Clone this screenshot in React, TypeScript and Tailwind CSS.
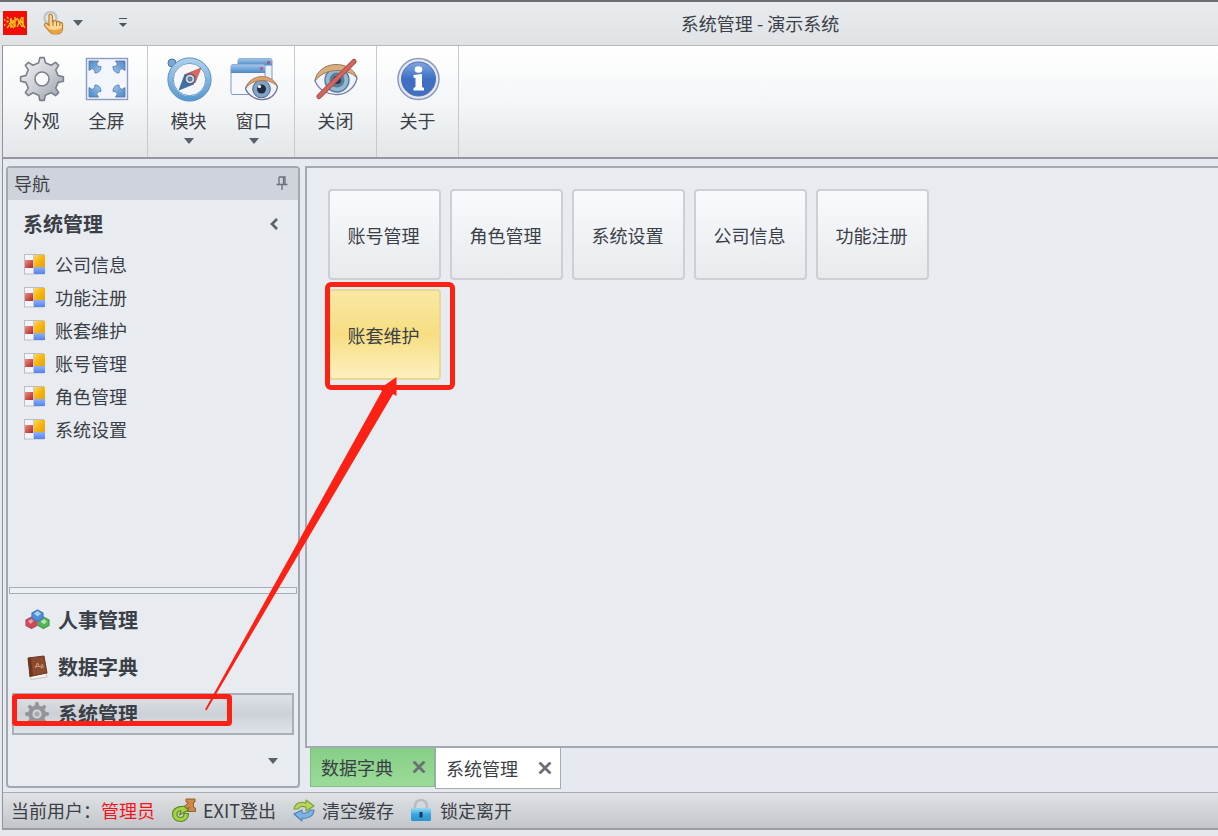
import type { ReactNode } from "react";

const gear = (teeth: number, outer: number, inner: number, c: number) => {
  const pts: string[] = [];
  const step = (Math.PI * 2) / teeth;
  for (let i = 0; i < teeth; i++) {
    const a = i * step - Math.PI / 2;
    const parts: [number, number][] = [
      [a - step * 0.26, inner],
      [a - step * 0.13, outer],
      [a + step * 0.13, outer],
      [a + step * 0.26, inner],
    ];
    parts.forEach(([t, r]) => pts.push(`${(c + Math.cos(t) * r).toFixed(2)} ${(c + Math.sin(t) * r).toFixed(2)}`));
  }
  return `M${pts.join("L")}Z`;
};

function GearIcon() {
  return (
    <svg viewBox="0 0 46 46" className="h-[46px] w-[46px]" aria-hidden="true">
      <defs>
        <linearGradient id="gearFill" x1="0" y1="0" x2="1" y2="1">
          <stop offset="0" stopColor="#f3f4f6" />
          <stop offset="0.5" stopColor="#cdd0d6" />
          <stop offset="1" stopColor="#969ba6" />
        </linearGradient>
      </defs>
      <path
        fillRule="evenodd"
        d={gear(8, 21.5, 16.5, 23) + "M23 16a7 7 0 1 0 0 14a7 7 0 1 0 0-14Z"}
        fill="url(#gearFill)"
        stroke="#7b818c"
        strokeWidth="1.6"
        strokeLinejoin="round"
      />
    </svg>
  );
}

function FullScreenIcon() {
  const arrow = "M0.500 0.500H10L8 3.500C9 5.500 10.500 6 12.500 6C12.500 8 12 9.500 11 10.500C10 12 8.500 12.500 6.500 12.500C6.500 10.500 5.500 9 3.500 8L0.500 10Z";
  return (
    <svg viewBox="0 0 44 44" className="h-11 w-11" aria-hidden="true">
      <defs>
        <linearGradient id="fsFill" x1="0" y1="0" x2="1" y2="1">
          <stop offset="0" stopColor="#4a86c4" />
          <stop offset="1" stopColor="#9cc6ee" />
        </linearGradient>
      </defs>
      <rect x="1.5" y="1.5" width="41" height="41" fill="#f3f5fd" stroke="#8a9cc6" strokeWidth="1.4" />
      <g fill="url(#fsFill)" stroke="#5a7cad" strokeWidth="0.9" strokeLinejoin="round">
        <path d={arrow} transform="translate(3.5 3.5)" />
        <path d={arrow} transform="translate(40.5 3.5) scale(-1 1)" />
        <path d={arrow} transform="translate(3.5 40.5) scale(1 -1)" />
        <path d={arrow} transform="translate(40.5 40.5) scale(-1 -1)" />
      </g>
    </svg>
  );
}

function CompassIcon() {
  return (
    <svg viewBox="0 0 46 46" className="h-[46px] w-[46px]" aria-hidden="true">
      <defs>
        <linearGradient id="cmpRing" x1="0" y1="0" x2="0" y2="1">
          <stop offset="0" stopColor="#a9d0ec" />
          <stop offset="1" stopColor="#5a9ad2" />
        </linearGradient>
      </defs>
      <circle cx="6" cy="7" r="4" fill="#79a9d3" stroke="#4b76a5" />
      <circle cx="23.500" cy="23.500" r="19" fill="#f4f6fa" stroke="url(#cmpRing)" strokeWidth="5" />
      <circle cx="23.500" cy="23.500" r="21.6" fill="none" stroke="#5a8dbd" strokeWidth="1" />
      <circle cx="23.500" cy="23.500" r="16.2" fill="none" stroke="#6d9ac4" strokeWidth="1" />
      <path d="M35 12L29 27L20 18Z" fill="#e0655c" stroke="#b35050" strokeWidth="0.6" />
      <path d="M13 34L28 28L19 18Z" fill="#416fa9" stroke="#305987" strokeWidth="0.6" />
      <circle cx="24" cy="23" r="5" fill="#c9d9ea" stroke="#4b5f7e" strokeWidth="1.3" />
      <circle cx="24" cy="23" r="2" fill="#748ead" stroke="#4b5f7e" />
    </svg>
  );
}

function WindowEyeIcon() {
  return (
    <svg viewBox="0 0 48 46" className="h-[46px] w-12" aria-hidden="true">
      <defs>
        <linearGradient id="winBar" x1="0" y1="0" x2="0" y2="1">
          <stop offset="0" stopColor="#a3c9ec" />
          <stop offset="1" stopColor="#4a86c4" />
        </linearGradient>
      </defs>
      <rect x="8" y="2.500" width="34" height="30" rx="2" fill="#eef2fb" stroke="#7f98c4" />
      <path d="M8 4.500a2 2 0 0 1 2-2H40a2 2 0 0 1 2 2V9.500H8Z" fill="url(#winBar)" />
      <rect x="1" y="8.500" width="34" height="30" rx="2" fill="#f6f8fe" stroke="#7f98c4" />
      <path d="M1 10.500a2 2 0 0 1 2-2H33a2 2 0 0 1 2 2V17H1Z" fill="url(#winBar)" />
      <rect x="30" y="11" width="3" height="3" fill="#b0608f" />
      <rect x="37" y="5" width="3" height="3" fill="#9a5f8c" />
      <path d="M15.500 33C20 19 43 19 47.500 31C44 48 22 47 15.500 33Z" fill="#f1f1fa" stroke="#74769f" strokeWidth="1.3" />
      <circle cx="31.500" cy="33" r="8.800" fill="#83a3c2" stroke="#4b6888" />
      <circle cx="31.500" cy="33" r="4.500" fill="#202c40" />
      <circle cx="29.500" cy="30.500" r="1.6" fill="#fff" />
      <path d="M15.500 32C21 17 42 17 47 30C40 22.500 24 22 15.500 32Z" fill="#e0a068" stroke="#a07655" strokeWidth="0.8" />
    </svg>
  );
}

function EyeOffIcon() {
  return (
    <svg viewBox="0 0 46 46" className="h-[46px] w-[46px]" aria-hidden="true">
      <path d="M2 25C8 6 38 6 44 22C40 42 11 45 2 25Z" fill="#f1f3fb" stroke="#7c83a8" strokeWidth="1.3" />
      <circle cx="24" cy="24" r="12" fill="#93b8cf" stroke="#547a9c" strokeWidth="1.4" />
      <circle cx="24" cy="24" r="7.500" fill="#567e9e" />
      <circle cx="24" cy="24" r="4" fill="#28384b" />
      <path d="M2 25C5 4 38 3 44 22C34 11 11 12 2 25Z" fill="#d9ae7c" stroke="#99795d" />
      <path d="M6 40.500L41 5.500" stroke="#a34444" strokeWidth="5.200" strokeLinecap="round" />
      <path d="M6 40.500L41 5.500" stroke="#d2665c" strokeWidth="3.400" strokeLinecap="round" />
    </svg>
  );
}

function InfoIcon() {
  return (
    <svg viewBox="0 0 46 46" className="h-[46px] w-[46px]" aria-hidden="true">
      <defs>
        <linearGradient id="infoFill" x1="0" y1="0" x2="0" y2="1">
          <stop offset="0" stopColor="#7fa7e2" />
          <stop offset="0.5" stopColor="#3d6fc4" />
          <stop offset="1" stopColor="#4371c2" />
        </linearGradient>
      </defs>
      <circle cx="23.500" cy="23" r="20.500" fill="#e3e6f4" stroke="#8d98b8" strokeWidth="1.5" />
      <circle cx="23.500" cy="23" r="17" fill="url(#infoFill)" stroke="#4e6fae" />
      <ellipse cx="23.500" cy="13.500" rx="3.800" ry="3.200" fill="#fff" />
      <path d="M18.500 19L27 18V31L29 32V34.500H18.500V32L20.500 31V22L18.500 21.500Z" fill="#fff" />
    </svg>
  );
}

function HandIcon() {
  return (
    <svg viewBox="0 0 24 26" className="h-[26px] w-6" aria-hidden="true">
      <circle cx="7.500" cy="8" r="6" fill="none" stroke="#bfc6ca" strokeWidth="2.500" />
      <path
        d="M6 5c1.500-1.300 3.500-.3 3.500 1.300V12l1.500-1.500 2 .5 1 .8 1.700-.6 1.300 1.300 1.500-.2 1 1.500V19c0 3-2.500 5-5.500 5H11c-2 0-3.500-1-4.500-2.500L1.500 15.500c-.5-1.500 1-2.700 2.500-1.700L6 15.500Z"
        fill="#ffd795"
        stroke="#bd7d2e"
        strokeWidth="1.200"
      />
      <path d="M10 12v4M13.500 12v4M16.800 13v3" stroke="#b0742d" strokeWidth="1" />
      <path d="M5 18c3 2.500 9 2.500 14 0c0 3-2 5.500-5 5.500h-4c-2 0-4-3-5-5.500Z" fill="#eba23e" />
    </svg>
  );
}

function AppLogo() {
  return (
    <svg viewBox="0 0 24 24" className="h-6 w-6" aria-hidden="true">
      <rect width="24" height="24" fill="#f30d0a" />
      <path
        d="M1 9h1.500M1 14h1.500M4 6l1.500 1.500M3.500 11l2-1M4 17l2.500-3M8 7v10M7 8l5 8M12 6v10M14 7l5 9M14 16l5-10M20 6v10M10 12l4-4M17 8l5 9M6 12l5 5M15 11h5M7 10h4"
        stroke="#f0c81c"
        strokeWidth="1.400"
        fill="none"
      />
    </svg>
  );
}

function FormIcon() {
  return (
    <svg viewBox="0 0 21 21" className="h-[21px] w-[21px] shrink-0" aria-hidden="true">
      <defs>
        <linearGradient id="fmY" x1="0" y1="0" x2="1" y2="1">
          <stop offset="0" stopColor="#ffd75e" />
          <stop offset="0.5" stopColor="#f7b50c" />
          <stop offset="1" stopColor="#e3a214" />
        </linearGradient>
        <linearGradient id="fmR" x1="0" y1="0" x2="1" y2="1">
          <stop offset="0" stopColor="#ee8d80" />
          <stop offset="1" stopColor="#b02525" />
        </linearGradient>
        <linearGradient id="fmB" x1="0" y1="0" x2="0" y2="1">
          <stop offset="0" stopColor="#8db0fb" />
          <stop offset="1" stopColor="#5483ec" />
        </linearGradient>
      </defs>
      <rect x="0.500" y="0.500" width="19" height="19.500" fill="#f4f4f8" stroke="#babdc6" />
      <rect x="10" y="1" width="11" height="12" fill="url(#fmY)" />
      <rect x="1" y="6" width="8" height="8" fill="url(#fmR)" />
      <rect x="10" y="13" width="11" height="7" fill="url(#fmB)" />
      <path d="M9.500 1V20" stroke="#c8cad2" />
    </svg>
  );
}

function SpheresIcon() {
  const hex = "M6.500 0.500L12 3.500V9L6.500 12L1 9V3.500Z";
  return (
    <svg viewBox="0 0 25 22" className="h-[22px] w-[25px]" aria-hidden="true">
      <g strokeLinejoin="round" strokeWidth="1.200">
        <path d={hex} transform="translate(0 7.500)" fill="#d0495e" stroke="#b54a5c" />
        <path d={hex} transform="translate(12 7.500)" fill="#55b257" stroke="#4b9c50" />
        <path d={hex} transform="translate(6 0.500)" fill="#4f8fd6" stroke="#437bbd" />
      </g>
      <path d="M9 4.500l3.500-2.500 3.500 2.500-3.500 3Z" fill="#a9d2f8" />
      <path d="M3 12l3.500-2 2 2-3 3Z" fill="#eda0ac" />
      <path d="M15.500 12.500l3.500-2.500 3 2.500-3 3Z" fill="#b2e3a5" />
    </svg>
  );
}

function BookIcon() {
  return (
    <svg viewBox="0 0 25 25" className="h-[25px] w-[25px]" aria-hidden="true">
      <path d="M4 20L21 18L22 22L6 24.500Z" fill="#f6f3ee" stroke="#b9b1a8" strokeWidth="0.700" />
      <path d="M3 3L19 1L22 18L5 21.500Z" fill="#8c4a30" stroke="#693621" />
      <path d="M3 3L6 2.700L8 21L5 21.500Z" fill="#6e3520" />
      <path d="M10 13l2.500-5 2 4M11 11.500h3M15.500 11l2-1.500.7 3-2 .3Z" stroke="#d6a07c" strokeWidth="1" fill="none" />
    </svg>
  );
}

function SmallGearIcon() {
  return (
    <svg viewBox="0 0 24 24" className="h-6 w-6" aria-hidden="true">
      <path
        fillRule="evenodd"
        d={gear(8, 11.5, 8.5, 12) + "M12 7a5 5 0 1 0 0 10a5 5 0 1 0 0-10Z"}
        fill="#929496"
        stroke="#929496"
        strokeLinejoin="round"
        strokeWidth="0.800"
      />
      <circle cx="12" cy="12" r="2.500" fill="#a8aaad" />
    </svg>
  );
}

function ExitIcon() {
  return (
    <svg viewBox="0 0 26 26" className="h-[26px] w-[26px]" aria-hidden="true">
      <path d="M15 2h9v3l-1.500.5v5l2 .5v3.500H16v-3l2.500-.8L11 14l-1.500-2L17.500 6 15 5Z" fill="#cd8748" stroke="#96602f" strokeLinejoin="round" />
      <path
        d="M13.500 9.500C6 8.500 1.500 12.500 1.500 17C1.500 22 5.500 24.500 9.500 24.500C14 24.500 17.500 21.500 17.500 16.500H13C13 19.500 11.500 20.500 9.500 20.500C7.500 20.500 6 19 6 17C6 15 8 13.500 10 13.800L8.500 18L17.500 13Z"
        fill="#a4d147"
        stroke="#5d8c22"
        strokeWidth="1.200"
        strokeLinejoin="round"
      />
    </svg>
  );
}

function RefreshIcon() {
  return (
    <svg viewBox="0 0 24 24" className="h-6 w-6" aria-hidden="true">
      <path d="M2 11c1-6 7-8 12-6l0-3 8 6-8 5v-4c-4-1-6-1-8 2Z" fill="#b9d65c" stroke="#7ba038" strokeWidth="1.100" strokeLinejoin="round" />
      <path d="M22 12c0 6-6 9-12 8v3l-8-7 8-4v3c4 1 6 0 8-3Z" fill="#7db3e4" stroke="#4a80b5" strokeWidth="1.100" strokeLinejoin="round" />
    </svg>
  );
}

function LockIcon() {
  return (
    <svg viewBox="0 0 22 24" className="h-6 w-[22px]" aria-hidden="true">
      <defs>
        <linearGradient id="lockFill" x1="0" y1="0" x2="0" y2="1">
          <stop offset="0" stopColor="#9ad8f4" />
          <stop offset="0.500" stopColor="#3aa5dc" />
          <stop offset="1" stopColor="#2c93cc" />
        </linearGradient>
      </defs>
      <path d="M5 12V8a6 6 0 0 1 12 0v4" fill="none" stroke="#b3bec7" strokeWidth="2.600" />
      <rect x="1" y="10" width="20" height="13" rx="1.500" fill="url(#lockFill)" />
      <path d="M9.500 14h3v5.500h-3Z" fill="#143c62" />
    </svg>
  );
}

function Caret({ className = "" }: { className?: string }) {
  return (
    <svg viewBox="0 0 10 6" className={`h-1.5 w-2.5 ${className}`} aria-hidden="true">
      <path d="M0 0H10L5 6Z" fill="#5a6068" />
    </svg>
  );
}

function RibbonButton({ icon, label, menu }: { icon: ReactNode; label: string; menu?: boolean }) {
  return (
    <button className="flex w-[65px] flex-col items-center pt-2.5">
      <span className="flex h-[46px] items-center">{icon}</span>
      <span className="mt-1 text-lg leading-7">{label}</span>
      {menu && <Caret className="mt-1" />}
    </button>
  );
}

function Close() {
  return (
    <svg viewBox="0 0 14 12" className="h-3 w-3.5" aria-hidden="true">
      <path d="M1.500 0.500L12.500 11.500M12.500 0.500L1.500 11.500" stroke="#6a7076" strokeWidth="2.800" />
    </svg>
  );
}

const links = ["公司信息", "功能注册", "账套维护", "账号管理", "角色管理", "系统设置"];
const tiles = ["账号管理", "角色管理", "系统设置", "公司信息", "功能注册", "账套维护"];
const modules = [
  { label: "人事管理", icon: <SpheresIcon /> },
  { label: "数据字典", icon: <BookIcon /> },
  { label: "系统管理", icon: <SmallGearIcon /> },
];

export default function App() {
  return (
    <div className="relative flex min-h-screen flex-col overflow-hidden border-t-2 border-[#6b6e72] bg-[#e4e8ec] pb-1.5 font-['Noto_Sans_CJK_SC',sans-serif] text-lg text-[#3b4047]">
      <header className="flex h-[43px] items-center bg-linear-to-b from-[#e9ecef] to-[#dfe3e6] pb-0.5">
        <div className="flex w-[302px] items-center pl-[3px]">
          <AppLogo />
          <button className="ml-4 flex items-center gap-1.5" aria-label="触摸模式">
            <HandIcon />
            <Caret />
          </button>
          <button className="ml-9 flex flex-col items-center gap-1" aria-label="自定义快速访问工具栏">
            <span className="h-px w-2 bg-[#4d535b]" />
            <svg viewBox="0 0 8 4" className="h-1 w-2" aria-hidden="true">
              <path d="M0 0H8L4 4Z" fill="#4d535b" />
            </svg>
          </button>
        </div>
        <h1 className="flex-1 text-center">系统管理 - 演示系统</h1>
      </header>

      <div className="ml-0.5 flex flex-1 flex-col border-l border-[#8f949b]">
        <div className="flex h-[114px] border-t border-b-2 border-t-[#b4babd] border-b-[#94989e] bg-linear-to-b from-white via-[#f4f6f7] to-[#e3e7ea]">
          <div className="flex border-r border-[#c6cacd] pr-2 pl-1.5">
            <RibbonButton icon={<GearIcon />} label="外观" />
            <RibbonButton icon={<FullScreenIcon />} label="全屏" />
          </div>
          <div className="flex border-r border-[#c6cacd] px-2">
            <RibbonButton icon={<CompassIcon />} label="模块" menu />
            <RibbonButton icon={<WindowEyeIcon />} label="窗口" menu />
          </div>
          <div className="flex border-r border-[#c6cacd] px-2">
            <RibbonButton icon={<EyeOffIcon />} label="关闭" />
          </div>
          <div className="flex border-r border-[#c6cacd] px-2">
            <RibbonButton icon={<InfoIcon />} label="关于" />
          </div>
        </div>

        <div className="flex flex-1 bg-[#e6eaf0] pt-[7px] pl-[3px]">
          <aside className="mb-1 flex w-[294px] shrink-0 flex-col rounded-sm border-2 border-[#a3a7b0] bg-[#e8ebef]">
            <div className="flex h-8 items-center justify-between bg-[#cfd3db] pr-2.5 pb-0.5 pl-1.5">
              <h2>导航</h2>
              <button aria-label="固定">
                <svg viewBox="0 0 12 14" className="h-3.5 w-3" aria-hidden="true">
                  <path d="M3 1H9V8M3 1V8M7.500 1V8M0.500 8.500H11.500M6 9V14" fill="none" stroke="#6a707b" strokeWidth="1.300" />
                </svg>
              </button>
            </div>
            <div className="flex h-12 items-center justify-between pr-5 pl-[15px]">
              <h3 className="text-xl font-bold">系统管理</h3>
              <button aria-label="折叠">
                <svg viewBox="0 0 8 12" className="h-3 w-2" aria-hidden="true">
                  <path d="M7 1L2 6L7 11" fill="none" stroke="#5d626a" strokeWidth="2.600" />
                </svg>
              </button>
            </div>
            <ul className="flex flex-col">
              {links.map((label) => (
                <li key={label}>
                  <a href="#" className="flex h-[33px] items-center gap-2.5 pl-4">
                    <FormIcon />
                    <span className="pb-0.5">{label}</span>
                  </a>
                </li>
              ))}
            </ul>
            <div className="mx-px mt-auto h-[7px] border border-[#a6abb5] bg-[#eceff3]" />
            <nav className="mx-1 mt-[5px] flex flex-col gap-[5px]">
              {modules.map((m, i) => (
                <button
                  key={m.label}
                  className={
                    i === 2
                      ? "relative flex h-[42px] items-center border-2 border-[#a9aeb7] bg-linear-to-b from-[#dee2e7] via-[#ccd1d8] to-[#dfe3e9] pl-2.5 text-xl font-bold"
                      : "flex h-[42px] items-center border-2 border-transparent pl-2.5 text-xl font-bold"
                  }
                >
                  <span className="mr-2 flex w-[26px] justify-center">{m.icon}</span>
                  {m.label}
                  {i === 2 && (
                    <span className="absolute -top-px -left-0.5 h-8 w-[220px] rounded border-[5px] border-[#fb2114]" />
                  )}
                </button>
              ))}
            </nav>
            <button className="flex h-[51px] items-center justify-end pr-5" aria-label="更多">
              <Caret />
            </button>
          </aside>

          <div className="ml-[5px] flex min-w-0 flex-1 flex-col">
            <main className="flex-1 border-2 border-r-0 border-[#a4a9b4] bg-[#e8ebef] pt-[21px] pl-[21px]">
              <div className="grid grid-cols-[repeat(5,113px)] gap-[9px]">
                {tiles.map((label, i) =>
                  i === 5 ? (
                    <button
                      key={label}
                      className="relative h-[91px] rounded border-2 border-[#ead795] bg-linear-to-b from-[#f9e8a4] via-[#f7de82] to-[#fdf0bd] pr-0.5"
                    >
                      {label}
                      <span className="absolute -top-[9px] -left-[5px] h-[108px] w-[130px] rounded-md border-[5px] border-[#fb2114]" />
                    </button>
                  ) : (
                    <button
                      key={label}
                      className="h-[91px] rounded border-2 border-[#cdd0d3] bg-linear-to-b from-[#f8fafd] to-[#e8ebee] pr-0.5"
                    >
                      {label}
                    </button>
                  ),
                )}
              </div>
            </main>
            <div className="flex h-11 items-start pl-[5px]">
              <div className="flex h-[39px] w-[125px] items-center justify-between border border-t-0 border-[#83bb85] bg-linear-to-b from-[#86cf86] to-[#9bdb98] pr-2 pl-2.5">
                <button>数据字典</button>
                <button aria-label="关闭 数据字典">
                  <Close />
                </button>
              </div>
              <div className="flex h-[41px] w-[126px] items-center justify-between border border-t-0 border-[#a7abb2] bg-white pr-2 pl-2.5">
                <button>系统管理</button>
                <button aria-label="关闭 系统管理">
                  <Close />
                </button>
              </div>
            </div>
          </div>
        </div>

        <footer className="flex h-[38px] items-center border-t border-b-2 border-t-[#a9adb2] border-b-[#999da2] bg-linear-to-b from-[#e0e2e5] to-[#c2c6ca] pb-0.5 pl-2">
          <span>当前用户：</span>
          <span className="text-[#f5141e]">管理员</span>
          <button className="ml-4 flex items-center gap-1.5">
            <ExitIcon />
            EXIT登出
          </button>
          <button className="ml-4 flex items-center gap-1.5">
            <RefreshIcon />
            清空缓存
          </button>
          <button className="ml-4 flex items-center gap-2">
            <LockIcon />
            锁定离开
          </button>
        </footer>
      </div>

      <svg
        viewBox="200 370 204 344"
        className="pointer-events-none absolute top-[368px] left-[200px] h-[344px] w-[204px]"
        aria-hidden="true"
      >
        <path d="M205 709.500L206.500 710.500L393 394L396.500 396L396.500 377L379 389L382 391Z" fill="#fb2114" />
      </svg>
    </div>
  );
}
